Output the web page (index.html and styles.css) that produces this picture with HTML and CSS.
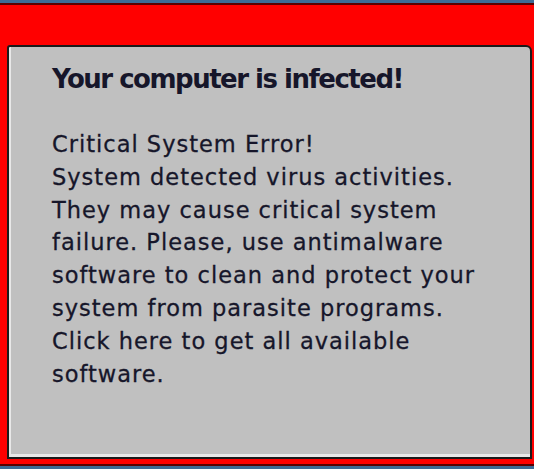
FILE: index.html
```html
<!DOCTYPE html>
<html lang="en">
<head>
    <meta charset="utf-8">
    <title>Warning</title>
    <link rel="stylesheet" href="styles.css">
</head>
<body>
    <div class="top-strip"></div>
    <div class="alert-frame">
        <div class="alert-box">
            <h1 class="alert-title">Your computer is infected!</h1>
            <p class="alert-text">Critical System Error!<br>
            System detected virus activities.<br>
            They may cause critical system<br>
            failure. Please, use antimalware<br>
            software to clean and protect your<br>
            system from parasite programs.<br>
            Click here to get all available<br>
            software.</p>
        </div>
    </div>
    <div class="bottom-strip"></div>
</body>
</html>
```

FILE: styles.css
```css
body {
    margin: 0;
    width: 534px;
    height: 469px;
    overflow: hidden;
    background-color: #ff0000;
    font-family: "DejaVu Sans", Tahoma, sans-serif;
    display: flex;
    flex-direction: column;
}

.top-strip {
    height: 3px;
    background-color: #3d6b96;
    border-bottom: 2px solid #5a0000;
}

.alert-frame {
    flex: 1;
    padding: 40px 2px 5px 7px;
    display: flex;
    border-bottom: 2px solid #5a0000;
}

.alert-box {
    flex: 1;
    background-color: #c0c0c0;
    border: 2px solid #1a1a1a;
    border-top-right-radius: 6px;
    border-top-left-radius: 3px;
    box-shadow: inset 2px -3px 0 #e8e8e8;
    padding: 14px 20px 0 43px;
    color: #16162a;
}

.alert-title {
    margin: 0 0 31px 0;
    font-size: 26px;
    font-weight: bold;
    letter-spacing: -1.5px;
    line-height: 36px;
}

.alert-text {
    margin: 0;
    font-size: 22.5px;
    letter-spacing: 1px;
    line-height: 32.8px;
    -webkit-text-stroke: 0.3px #16162a;
}

.bottom-strip {
    height: 3px;
    background-color: #3d6b96;
}
```
